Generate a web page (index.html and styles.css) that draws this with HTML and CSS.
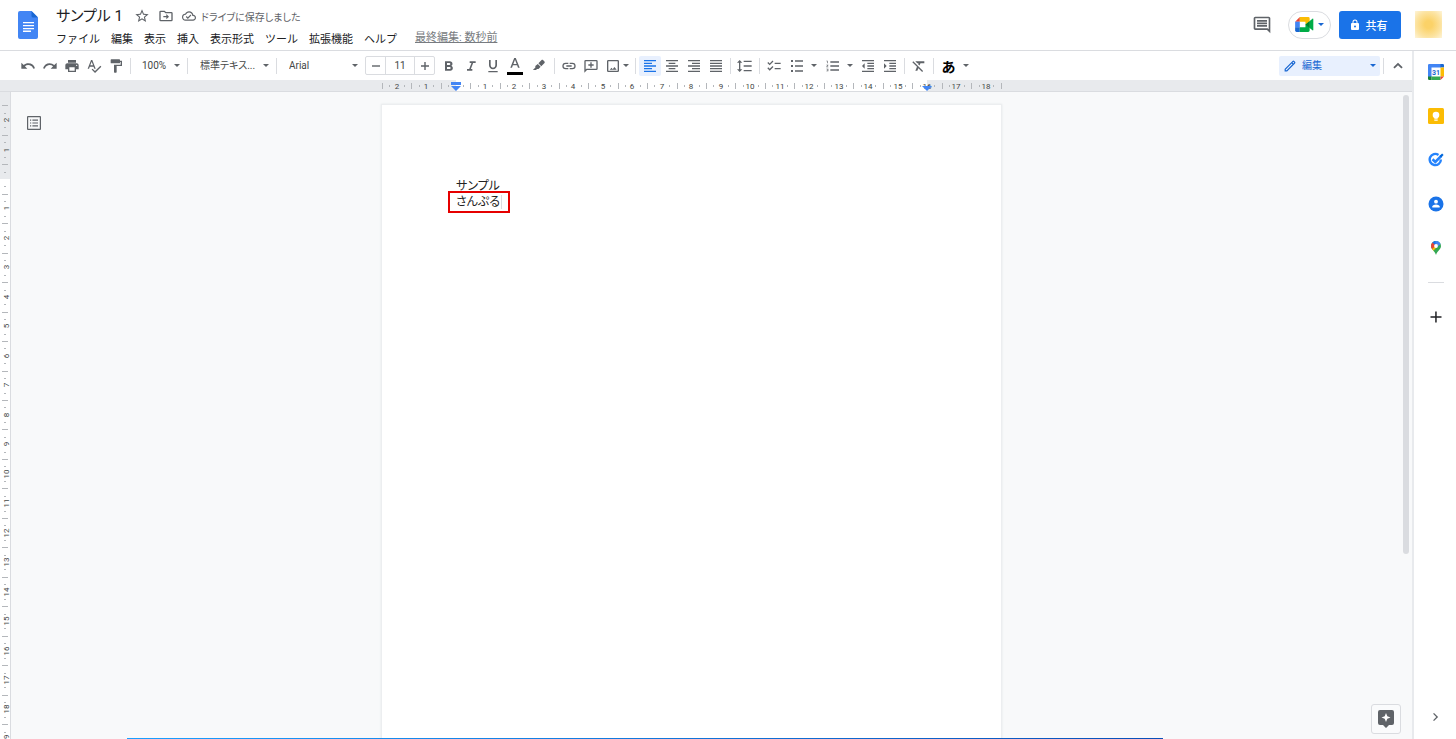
FILE: index.html
```html
<!DOCTYPE html>
<html lang="ja">
<head>
<meta charset="utf-8">
<title>サンプル 1</title>
<link rel="stylesheet" href="styles.css">
</head>
<body>
<header class="header">
  <a class="logo" href="#" aria-label="ドキュメント ホーム">
    <svg width="20" height="28" viewBox="0 0 20 28"><path fill="#4285f4" d="M2 0h11.500L20 6.500V26a2 2 0 0 1-2 2H2a2 2 0 0 1-2-2V2a2 2 0 0 1 2-2z"/><path fill="#1967d2" d="M13.500 0 20 6.500h-5a1.500 1.500 0 0 1-1.500-1.500z"/><path fill="#fff" d="M5 11h11v1.300H5zM5 14h11v1.300H5zM5 17h11v1.300H5zM5 19.600h8v1.300H5z"/></svg>
  </a>
  <div class="doc-head">
    <div class="title-row">
      <h1 class="title">サンプル 1</h1>
      <button class="head-icon" aria-label="スター"><svg class="i16" viewBox="0 0 24 24"><path d="M22 9.240l-7.190-.62L12 2 9.190 8.630 2 9.240l5.460 4.730L5.820 21 12 17.270 18.180 21l-1.630-7.030L22 9.240zM12 15.400l-3.760 2.270 1-4.280-3.320-2.880 4.380-.38L12 6.100l1.710 4.040 4.380.38-3.320 2.880 1 4.280L12 15.400z"/></svg></button>
      <button class="head-icon" aria-label="移動"><svg class="i16" viewBox="0 0 24 24"><path d="M20 6h-8l-2-2H4a2 2 0 0 0-2 2v12a2 2 0 0 0 2 2h16a2 2 0 0 0 2-2V8a2 2 0 0 0-2-2zm0 12H4V6h5.170l2 2H20v10zm-7.500-1 4-4-4-4v3H8v2h4.500v3z"/></svg></button>
      <span class="saved"><svg class="i14" viewBox="0 0 24 24"><path d="M19.350 10.040A7.490 7.490 0 0 0 12 4C9.110 4 6.600 5.640 5.350 8.040A5.994 5.994 0 0 0 0 14c0 3.310 2.690 6 6 6h13c2.760 0 5-2.240 5-5 0-2.640-2.050-4.780-4.650-4.960zM19 18H6c-2.210 0-4-1.790-4-4 0-2.050 1.530-3.760 3.560-3.970l1.070-.11.500-.95A5.469 5.469 0 0 1 12 6c2.620 0 4.880 1.860 5.390 4.430l.3 1.500 1.530.11A2.980 2.980 0 0 1 22 15c0 1.650-1.350 3-3 3zm-9-3.820-2.090-2.090L6.500 13.500 10 17l6.010-6.010-1.410-1.410z"/></svg>ドライブに保存しました</span>
    </div>
    <nav class="menu">
      <button>ファイル</button><button>編集</button><button>表示</button><button>挿入</button><button>表示形式</button><button>ツール</button><button>拡張機能</button><button>ヘルプ</button>
      <a class="last-edit" href="#">最終編集: 数秒前</a>
    </nav>
  </div>
  <div class="head-right">
    <button class="comments" aria-label="コメント"><svg width="20" height="20" viewBox="0 0 24 24"><path d="M21.990 4c0-1.100-.89-2-1.990-2H4c-1.100 0-2 .9-2 2v12c0 1.100.9 2 2 2h14l4 4-.010-18zM20 4v13.170L18.830 16H4V4h16zM6 12h12v2H6v-2zm0-3h12v2H6V9zm0-3h12v2H6V6z"/></svg></button>
    <button class="meet" aria-label="ビデオ会議">
      <svg width="19" height="15" viewBox="0 0 20 16"><path fill="#ea4335" d="M0 5 5 0v5z"/><path fill="#fbbc04" d="M5 0h9a1.500 1.500 0 0 1 1.500 1.500V5L11 8V5H5z"/><path fill="#4285f4" d="M0 5h5v6H0z"/><path fill="#1967d2" d="M0 11h5v5H1.500A1.500 1.500 0 0 1 0 14.500z"/><path fill="#00ac47" d="M5 11h6V8l4.500-3v9.500A1.500 1.500 0 0 1 14 16H5z"/><path fill="#00ac47" d="m15.500 4.300 3-2.500c.4-.3.900 0 .9.400v11.600c0 .4-.5.700-.9.400l-3-2.500z"/><path fill="#00832d" d="m11 8 4.500-3.700v7.400z"/></svg>
      <svg class="arrow blue" viewBox="0 0 6 3"><path d="M0 0h6L3 3z"/></svg>
    </button>
    <button class="share"><svg width="12" height="12" viewBox="0 0 24 24"><path d="M18 8h-1V6A5 5 0 0 0 7 6v2H6a2 2 0 0 0-2 2v10a2 2 0 0 0 2 2h12a2 2 0 0 0 2-2V10a2 2 0 0 0-2-2zm-6 9a2 2 0 1 1 0-4 2 2 0 0 1 0 4zM9 8V6a3 3 0 0 1 6 0v2z"/></svg>共有</button>
    <button class="avatar" aria-label="アカウント"></button>
  </div>
</header>

<div class="workspace">
  <main class="editor">
    <div class="toolbar" role="toolbar">
      <button class="tool" aria-label="元に戻す"><svg class="i16" viewBox="0 0 24 24"><path d="M12.500 8c-2.650 0-5.050.99-6.900 2.600L2 7v9h9l-3.620-3.620A8.002 8.002 0 0 1 20.100 16l2.370-.78A10.530 10.530 0 0 0 12.500 8z"/></svg></button>
      <button class="tool" aria-label="やり直し"><svg class="i16" viewBox="0 0 24 24"><path d="M18.400 10.600A10.460 10.460 0 0 0 11.500 8c-4.650 0-8.580 3.030-9.960 7.220L3.900 16a8.002 8.002 0 0 1 12.720-3.620L13 16h9V7l-3.600 3.600z"/></svg></button>
      <button class="tool" aria-label="印刷"><svg class="i16" viewBox="0 0 24 24"><path d="M19 8H5c-1.660 0-3 1.340-3 3v6h4v4h12v-4h4v-6c0-1.660-1.340-3-3-3zm-3 11H8v-5h8v5zm3-7a1 1 0 1 1 0-2 1 1 0 0 1 0 2zm-1-9H6v4h12V3z"/></svg></button>
      <button class="tool" aria-label="スペルチェック"><svg class="i16" viewBox="0 0 24 24"><path d="M12.450 16h2.090L9.430 3H7.570L2.460 16h2.090l1.120-3h5.640l1.140 3zm-6.020-5L8.500 5.480 10.570 11H6.430zm15.160.59-8.090 8.090L9.830 16l-1.410 1.410 5.090 5.090L23 13l-1.410-1.410z"/></svg></button>
      <button class="tool" aria-label="書式を貼り付け"><svg class="i16" viewBox="0 0 24 24"><path d="M18 4V3a1 1 0 0 0-1-1H5a1 1 0 0 0-1 1v4a1 1 0 0 0 1 1h12a1 1 0 0 0 1-1V6h1v4H9v11a1 1 0 0 0 1 1h2a1 1 0 0 0 1-1v-9h8V4h-3z"/></svg></button>
      <span class="sep"></span>
      <label class="drop zoom"><select aria-label="ズーム"><option>100%</option></select><svg class="arrow" viewBox="0 0 6 3"><path d="M0 0h6L3 3z"/></svg></label>
      <span class="sep"></span>
      <label class="drop style"><select aria-label="スタイル"><option>標準テキス...</option></select><svg class="arrow" viewBox="0 0 6 3"><path d="M0 0h6L3 3z"/></svg></label>
      <span class="sep"></span>
      <label class="drop font"><select aria-label="フォント"><option>Arial</option></select><svg class="arrow" viewBox="0 0 6 3"><path d="M0 0h6L3 3z"/></svg></label>
      <div class="size-box">
        <button aria-label="縮小"><svg width="8" height="8" viewBox="0 0 8 8"><path d="M0 3.300h8v1.400H0z"/></svg></button>
        <input type="text" value="11" aria-label="フォントサイズ">
        <button aria-label="拡大"><svg width="8" height="8" viewBox="0 0 8 8"><path d="M0 3.300h3.300V0h1.400v3.300H8v1.400H4.700V8H3.300V4.700H0z"/></svg></button>
      </div>
      <button class="tool" aria-label="太字"><svg class="i16" viewBox="0 0 24 24"><path d="M15.600 11.790c.97-.67 1.650-1.770 1.650-2.790 0-2.260-1.750-4-4-4H6v14h8.040c2.090 0 3.710-1.700 3.710-3.790 0-1.520-.86-2.820-2.150-3.420zM9 7.500h3.500a1.500 1.500 0 0 1 0 3H9v-3zm4 9H9v-3h4a1.500 1.500 0 0 1 0 3z"/></svg></button>
      <button class="tool" aria-label="斜体"><svg class="i16" viewBox="0 0 24 24"><path d="M10 5v2.500h2.710l-3.420 9H6V19h8v-2.500h-2.210l3.420-9H19V5z"/></svg></button>
      <button class="tool" aria-label="下線"><svg class="i16" viewBox="0 0 24 24"><path d="M12 17c3.310 0 6-2.690 6-6V3h-2.500v8a3.500 3.500 0 0 1-7 0V3H6v8c0 3.310 2.690 6 6 6zm-7 2.500v2h14v-2H5z"/></svg></button>
      <button class="tool" aria-label="文字の色"><svg width="18" height="18" viewBox="0 0 18 18"><path d="M8.200 1h1.600l3.900 9.700h-1.700l-.9-2.500H6.900L6 10.700H4.300zM9 2.700 7.400 6.900h3.200z"/><path fill="#000" d="M1 15h16v3H1z"/></svg></button>
      <button class="tool pen" aria-label="ハイライト"><svg width="14" height="14" viewBox="0 0 14 14"><path d="M9.600 1.100c.4-.4 1-.4 1.400 0l1.500 1.500c.4.4.4 1 0 1.400L9.300 7.200 6.400 4.300zM5.800 4.900 8.700 7.800l-2.200 2.200-1.500-.1-1 1H.9l2.500-2.500-.1-1.300z"/></svg></button>
      <span class="sep"></span>
      <button class="tool" aria-label="リンク"><svg class="i16" viewBox="0 0 24 24"><path d="M3.900 12A3.100 3.100 0 0 1 7 8.900h4V7H7a5 5 0 0 0 0 10h4v-1.900H7A3.100 3.100 0 0 1 3.900 12zM8 13h8v-2H8v2zm9-6h-4v1.900h4a3.100 3.100 0 0 1 0 6.200h-4V17h4a5 5 0 0 0 0-10z"/></svg></button>
      <button class="tool" aria-label="コメントを追加"><svg class="i16" viewBox="0 0 24 24"><path d="M20 3H4a2 2 0 0 0-2 2v17l4-4h14a2 2 0 0 0 2-2V5a2 2 0 0 0-2-2zm0 13H5.200L4 17.200V5h16v11zm-9-1.500h2v-3h3v-2h-3v-3h-2v3H8v2h3z"/></svg></button>
      <button class="tool image" aria-label="画像"><svg class="i16" viewBox="0 0 24 24"><path d="M19 5v14H5V5h14m0-2H5a2 2 0 0 0-2 2v14a2 2 0 0 0 2 2h14a2 2 0 0 0 2-2V5a2 2 0 0 0-2-2zm-4.860 10.500-2.500 3.200L9.900 14.600 7 17.500h10.500z"/></svg><svg class="arrow" viewBox="0 0 6 3"><path d="M0 0h6L3 3z"/></svg></button>
      <span class="sep"></span>
      <button class="tool active" aria-label="左揃え"><svg class="i16" viewBox="0 0 24 24"><path d="M15 15H3v2h12v-2zm0-8H3v2h12V7zM3 13h18v-2H3v2zm0 8h18v-2H3v2zM3 3v2h18V3H3z"/></svg></button>
      <button class="tool" aria-label="中央揃え"><svg class="i16" viewBox="0 0 24 24"><path d="M7 15v2h10v-2H7zm-4 6h18v-2H3v2zm0-8h18v-2H3v2zm4-6v2h10V7H7zM3 3v2h18V3H3z"/></svg></button>
      <button class="tool" aria-label="右揃え"><svg class="i16" viewBox="0 0 24 24"><path d="M3 21h18v-2H3v2zm6-4h12v-2H9v2zm-6-4h18v-2H3v2zm6-4h12V7H9v2zM3 3v2h18V3H3z"/></svg></button>
      <button class="tool" aria-label="両端揃え"><svg class="i16" viewBox="0 0 24 24"><path d="M3 21h18v-2H3v2zm0-4h18v-2H3v2zm0-4h18v-2H3v2zm0-4h18V7H3v2zm0-6v2h18V3H3z"/></svg></button>
      <span class="sep"></span>
      <button class="tool" aria-label="行間隔"><svg class="i16" viewBox="0 0 24 24"><path d="M5 7h3L4 3 0 7h3v10H0l4 4 4-4H5V7zm5-3v2h12V4H10zm0 16h12v-2H10v2zm0-7h12v-2H10v2z"/></svg></button>
      <span class="sep"></span>
      <button class="tool" aria-label="チェックリスト"><svg class="i16" viewBox="0 0 24 24"><path d="M22 7h-9v2h9V7zm0 8h-9v2h9v-2zM5.540 11 2 7.460l1.410-1.410 2.120 2.120 4.240-4.240 1.410 1.410L5.540 11zm0 8L2 15.460l1.410-1.410 2.120 2.120 4.240-4.240 1.410 1.410L5.540 19z"/></svg></button>
      <button class="tool list" aria-label="箇条書き"><svg class="i16" viewBox="0 0 24 24"><path d="M3 3h3v3H3zM3 10.500h3v3H3zM3 18h3v3H3zM9 3.500h12v2H9zM9 11h12v2H9zM9 18.500h12v2H9z"/></svg><svg class="arrow" viewBox="0 0 6 3"><path d="M0 0h6L3 3z"/></svg></button>
      <button class="tool list" aria-label="番号付きリスト"><svg class="i16" viewBox="0 0 24 24"><path d="M2 17h2v.5H3v1h1v.5H2v1h3v-4H2v1zm1-9h1V4H2v1h1v3zm-1 3h1.800L2 13.100v.9h3v-1H3.200L5 10.900V10H2v1zm6-6v2h13V5H8zm0 14h13v-2H8v2zm0-6h13v-2H8v2z"/></svg><svg class="arrow" viewBox="0 0 6 3"><path d="M0 0h6L3 3z"/></svg></button>
      <button class="tool" aria-label="インデント減"><svg class="i16" viewBox="0 0 24 24"><path d="M11 17h10v-2H11v2zm-8-5 4 4V8l-4 4zm0 9h18v-2H3v2zM3 3v2h18V3H3zm8 6h10V7H11v2zm0 4h10v-2H11v2z"/></svg></button>
      <button class="tool" aria-label="インデント増"><svg class="i16" viewBox="0 0 24 24"><path d="M3 21h18v-2H3v2zM3 8v8l4-4-4-4zm8 9h10v-2H11v2zM3 3v2h18V3H3zm8 6h10V7H11v2zm0 4h10v-2H11v2z"/></svg></button>
      <span class="sep"></span>
      <button class="tool" aria-label="書式をクリア"><svg class="i16" viewBox="0 0 24 24"><path d="M20 8V5H6.390l3 3h1.830l-.55 1.280 2.090 2.100L14.210 8H20zM3.410 4.860 2 6.270l6.970 6.970L6.500 19h3l1.570-3.660L16.730 21l1.410-1.410z"/></svg></button>
      <span class="sep"></span>
      <button class="tool ime" aria-label="入力ツール">あ<svg class="arrow" viewBox="0 0 6 3"><path d="M0 0h6L3 3z"/></svg></button>
      <div class="mode-area">
        <label class="mode"><svg width="12" height="12" viewBox="2 2 20 20"><path d="M20.410 4.940l-1.350-1.350a2.010 2.010 0 0 0-2.830 0L3 16.820V21h4.180L20.410 7.770a2 2 0 0 0 0-2.830zM6.410 19.060l-1.470-.01.010-1.420 9.830-9.830 1.410 1.410-9.780 9.850zM17.610 7.800 16.200 6.390l1.440-1.390L19 6.370z"/></svg><select aria-label="モード"><option>編集</option></select><svg class="arrow blue" viewBox="0 0 6 3"><path d="M0 0h6L3 3z"/></svg></label>
        <span class="sep"></span>
        <button class="tool" aria-label="メニューを非表示"><svg class="i16" viewBox="0 0 24 24"><path d="M12 7l-7 7 1.900 1.900 5.100-5.100 5.100 5.100L19 14z"/></svg></button>
      </div>
    </div>

    <div class="h-ruler"><svg id="h-ruler" width="621" height="11"></svg></div>

    <div class="canvas">
      <div class="v-ruler"><svg id="v-ruler" width="10" height="647"></svg></div>
      <div class="pages">
        <button class="outline" aria-label="概要を表示"><svg width="14" height="14" viewBox="0 0 14 14"><path fill-rule="evenodd" d="M1 0h12a1 1 0 0 1 1 1v12a1 1 0 0 1-1 1H1a1 1 0 0 1-1-1V1a1 1 0 0 1 1-1zm.2 1.200v11.600h11.600V1.200zM3 3.500h1.200v1.200H3zm2.400 0H11v1.200H5.400zM3 6.400h1.200v1.200H3zm2.400 0H11v1.200H5.400zM3 9.300h1.200v1.200H3zm2.400 0H11v1.200H5.400z"/></svg></button>
        <article class="page">
          <p>サンプル</p>
          <p><span class="marked">さんぷる<span class="caret"></span></span></p>
        </article>
        <div class="scroll-thumb"></div>
        <button class="explore" aria-label="データ探索"><svg width="16" height="18" viewBox="0 0 16 18"><path fill="#5f6368" d="M2 0h12a2 2 0 0 1 2 2v11a2 2 0 0 1-2 2h-3l-3 3-3-3H2a2 2 0 0 1-2-2V2a2 2 0 0 1 2-2z"/><path fill="#fff" d="m8 3 1.300 3.200L12.500 7.500 9.300 8.800 8 12 6.700 8.800 3.500 7.500l3.200-1.300z"/></svg></button>
      </div>
    </div>
  </main>

  <aside class="side">
    <button aria-label="カレンダー"><svg width="16" height="16" viewBox="0 0 16 16"><path fill="#fff" d="M3 3h10v10H3z"/><path fill="#4285f4" d="M1.200 0H13v3.500H3.500V13H0V1.200A1.200 1.200 0 0 1 1.200 0z"/><path fill="#1967d2" d="M12.500 0h2.300A1.200 1.200 0 0 1 16 1.200v2.300h-3.500z"/><path fill="#fbbc04" d="M12.500 3.500H16v9h-3.500z"/><path fill="#34a853" d="M3.500 12.500h9V16h-9z"/><path fill="#188038" d="M0 12.500h3.500V16H1.200A1.200 1.200 0 0 1 0 14.800z"/><path fill="#ea4335" d="M12.500 12.500H16L12.500 16z"/><text x="8" y="10.500" class="cal-day">31</text></svg></button>
    <button aria-label="Keep"><svg width="16" height="16" viewBox="0 0 16 16"><rect width="16" height="16" rx="1.500" fill="#fbbc04"/><circle cx="8" cy="7" r="3.300" fill="#fff"/><path fill="#fff" d="M6.300 9h3.400v1.700H6.300zM6.300 11.400h3.400v1.300H6.300z"/></svg></button>
    <button aria-label="ToDo リスト"><svg width="16" height="16" viewBox="0 0 16 16"><path fill="none" stroke="#2684fc" stroke-width="2.400" d="M10.500 2.900A5.600 5.600 0 1 0 12.900 7.500"/><path fill="none" stroke="#2684fc" stroke-width="2.600" d="m4.500 7.200 2.800 2.700L13.500 3.800"/><path fill="#0066da" d="m11.500 4 2.600-2.600 1.500 1.600-2.600 2.600z"/></svg></button>
    <button aria-label="連絡先"><svg width="16" height="16" viewBox="0 0 16 16"><circle cx="8" cy="8" r="7.500" fill="#1a73e8"/><circle cx="8" cy="5.700" r="1.900" fill="#fff"/><path fill="#fff" d="M4.300 11.500V10.600c0-1.300 2.400-2 3.700-2s3.700.7 3.700 2v.9z"/></svg></button>
    <button aria-label="マップ"><svg width="16" height="16" viewBox="0 0 16 16"><clipPath id="pin"><path d="M8 1a5 5 0 0 0-5 5c0 3.700 3.700 4.600 5 9 1.300-4.400 5-5.300 5-9a5 5 0 0 0-5-5z"/></clipPath><g clip-path="url(#pin)"><path fill="#34a853" d="M0 0h16v16H0z"/><path fill="#4285f4" d="M6 0h8v3L8 8z"/><path fill="#1a73e8" d="M3 0h4.500v5L3 3z"/><path fill="#ea4335" d="M0 2h4l4 4-5 4H0z"/><path fill="#fbbc04" d="m3 10 7-6L8 8l-4 4z"/></g><circle cx="8" cy="6" r="1.900" fill="#fff"/></svg></button>
    <hr>
    <button aria-label="アドオンを取得"><svg width="12" height="12" viewBox="0 0 12 12"><path fill="#202124" d="M.5 5.200h4.700V.5h1.500v4.700h4.800v1.500H6.700v4.800H5.200V6.700H.5z"/></svg></button>
    <button class="collapse" aria-label="サイドパネルを非表示"><svg class="i14" viewBox="0 0 24 24"><path d="M8.600 5 7 6.600l5.400 5.400L7 17.400 8.600 19l7-7z"/></svg></button>
  </aside>
</div>
<div class="progress"></div>
<script src="rulers.js"></script>
</body>
</html>
```

FILE: styles.css
```css
* { box-sizing: border-box; }

body {
  margin: 0;
  height: 100vh;
  display: flex;
  flex-direction: column;
  overflow: hidden;
  background: #fff;
  color: #202124;
  font-family: Roboto, "Noto Sans CJK JP", sans-serif;
  font-size: 11px;
}

button, select, input {
  margin: 0;
  padding: 0;
  border: 0;
  background: none;
  font: inherit;
  color: inherit;
}

svg { display: block; flex: none; fill: #5f6368; }
.i16 { width: 16px; height: 16px; }
.i14 { width: 14px; height: 14px; }
.arrow { width: 6px; height: 3px; }
.arrow.blue { fill: #1967d2; }

.header {
  display: flex;
  height: 51px;
  flex: none;
  border-bottom: 1px solid #dadce0;
}
.logo { padding: 11px 18px 0; }
.doc-head { flex: 1; }
.title-row {
  display: flex;
  align-items: center;
  height: 28px;
  padding-top: 4px;
}
.title {
  margin: 0 11px 0 0;
  font-size: 15px;
  font-weight: 400;
  line-height: 24px;
  font-feature-settings: "palt";
}
.head-icon { margin-right: 8px; }
.saved {
  display: flex;
  align-items: center;
  gap: 5px;
  color: #5f6368;
  font-size: 10px;
  font-feature-settings: "palt";
}
.menu {
  display: flex;
  align-items: center;
  gap: 11px;
  height: 20px;
}
.last-edit {
  margin: 0 0 4px 7px;
  color: #777b80;
}

.head-right {
  display: flex;
  align-items: center;
  padding: 0 14px 1px 0;
}
.comments { margin-right: 16px; }
.meet {
  display: flex;
  align-items: center;
  justify-content: center;
  gap: 4px;
  width: 43px;
  height: 28px;
  margin-right: 8px;
  border: 1px solid #dadce0;
  border-radius: 14px;
}
.share {
  display: flex;
  align-items: center;
  justify-content: center;
  gap: 5px;
  width: 62px;
  height: 28px;
  margin-right: 14px;
  padding-right: 4px;
  border-radius: 3px;
  background: #1a73e8;
  color: #fff;
  font-weight: 500;
}
.share svg { fill: #fff; }
.avatar {
  width: 27px;
  height: 27px;
  background: radial-gradient(circle, #fbd268 20%, #fce3a0 65%, #fef4d9 100%);
}

.workspace { flex: 1; display: flex; min-height: 0; }
.editor { flex: 1; display: flex; flex-direction: column; min-width: 0; }

.toolbar {
  display: flex;
  align-items: center;
  flex: none;
  height: 29px;
  padding-left: 17px;
  font-size: 10px;
  color: #444746;
}
.sep { width: 1px; height: 16px; margin: 0 3px; background: #dadce0; }
.tool {
  display: flex;
  align-items: center;
  justify-content: center;
  width: 22px;
  height: 20px;
  border-radius: 2px;
}
.tool.active { background: #e8f0fe; }
.tool.active svg { fill: #1a73e8; }
.tool.pen { width: 25px; }
.tool.image { width: 30px; gap: 2px; }
.tool.list { width: 36px; gap: 6px; }
.tool.ime {
  width: 36px;
  gap: 7px;
  font-size: 14px;
  font-weight: 700;
  color: #000;
}

.drop { display: grid; align-items: center; }
.drop select {
  grid-area: 1 / 1;
  appearance: none;
  width: 100%;
  height: 20px;
}
.drop .arrow { grid-area: 1 / 1; justify-self: end; margin-right: 4px; pointer-events: none; }
.zoom { width: 50px; }
.zoom select { padding-left: 8px; }
.style { width: 82px; }
.style select { padding-left: 9px; font-feature-settings: "palt"; }
.font { width: 82px; }
.font select { padding-left: 9px; }

.size-box {
  display: flex;
  width: 70px;
  height: 19px;
  margin: 0 3px;
  border: 1px solid #dadce0;
  border-radius: 2px;
}
.size-box button { display: grid; place-items: center; width: 19px; }
.size-box input {
  flex: 1;
  min-width: 0;
  border: solid #dadce0;
  border-width: 0 1px;
  text-align: center;
}

.mode-area { display: flex; align-items: center; margin-left: auto; padding-right: 3px; }
.mode {
  display: flex;
  align-items: center;
  width: 101px;
  height: 20px;
  padding: 0 4px 0 5px;
  border-radius: 2px;
  background: #e8f0fe;
  color: #1967d2;
}
.mode svg { fill: #1967d2; }
.mode select { appearance: none; flex: 1; padding-left: 6px; }

.h-ruler {
  display: flex;
  justify-content: center;
  flex: none;
  padding: 0 40px 0 11px;
  border-bottom: 1px solid #dadce0;
  background: #e8eaed;
}
.ruler-page { fill: #fff; }
.ruler-text {
  fill: #444746;
  font-family: Roboto, sans-serif;
  font-size: 8px;
  text-anchor: middle;
}
.ruler-tick { fill: #b4b7bb; }
.ruler-mark { fill: #4285f4; }

.canvas { flex: 1; display: flex; min-height: 0; overflow: hidden; background: #f8f9fa; }
.v-ruler {
  flex: none;
  width: 11px;
  overflow: hidden;
  border-right: 1px solid #dadce0;
  background: #e8eaed;
}
.pages {
  position: relative;
  flex: 1;
  display: flex;
  justify-content: center;
  padding: 12px 40px 0 0;
}
.page {
  width: 621px;
  padding: 73px 74px;
  border: 1px solid #eceef0;
  border-bottom: 0;
  background: #fff;
  box-shadow: 0 0 2px #e4e6e9;
  color: #222;
  font-size: 12px;
  line-height: 16px;
  font-feature-settings: "palt";
}
.page p { margin: 0; }
.marked {
  display: inline-flex;
  align-items: center;
  margin: 0 -5px;
  padding: 0 5px;
  outline: 2px solid #e60000;
  outline-offset: 1px;
}
.caret { width: 1px; height: 14px; margin-left: 1px; background: #dadce0; }
.outline { position: absolute; left: 16px; top: 24px; }
.scroll-thumb {
  position: absolute;
  top: 3px;
  right: 3px;
  width: 6px;
  height: 71%;
  border-radius: 3px;
  background: #dadce0;
}
.explore {
  position: absolute;
  right: 11px;
  bottom: 5px;
  display: grid;
  place-items: center;
  width: 30px;
  height: 30px;
  border: 1px solid #dadce0;
  border-radius: 3px;
  background: #fafbfc;
}

.side {
  display: flex;
  flex-direction: column;
  align-items: center;
  gap: 28px;
  width: 44px;
  padding: 13px 0 15px 1px;
  border-left: 2px solid #e8eaed;
}
.side hr {
  width: 16px;
  height: 1px;
  margin: -2px 0 0;
  border: 0;
  background: #dadce0;
}
.side .collapse { margin-top: auto; }
.cal-day {
  fill: #1967d2;
  font-family: Roboto, sans-serif;
  font-size: 7px;
  font-weight: 700;
  text-anchor: middle;
}

.progress {
  position: fixed;
  left: 8.7%;
  right: 20.1%;
  bottom: 0;
  height: 1px;
  background: linear-gradient(90deg, #1a9fff, #0a4fb8);
}
```

FILE: rulers.js
```js
const NS = "http://www.w3.org/2000/svg";
const CM = 29.47;

function add(parent, name, attrs, text) {
  const el = document.createElementNS(NS, name);
  for (const key in attrs) el.setAttribute(key, attrs[key]);
  if (text !== undefined) el.textContent = text;
  parent.appendChild(el);
}

// Horizontal ruler: numbers on centimetres, long ticks on halves, dots on quarters
const h = document.getElementById("h-ruler");
const hZero = 75;
add(h, "rect", { x: hZero, y: 0, width: 471, height: 11, class: "ruler-page" });
for (let q = -10; q <= 74; q++) {
  const x = Math.floor(hZero + q * CM / 4);
  if (q % 4 === 0) {
    if (q !== 0) add(h, "text", { x, y: 9, class: "ruler-text" }, Math.abs(q / 4));
  } else if (q % 2 === 0) {
    add(h, "rect", { x, y: 3, width: 1, height: 6, class: "ruler-tick" });
  } else {
    add(h, "rect", { x, y: 5, width: 1, height: 2, class: "ruler-tick" });
  }
}
add(h, "path", { d: "M70 2h10v3H70zM70 6h10l-5 5z", class: "ruler-mark" });
add(h, "path", { d: "M541 6h10l-5 5z", class: "ruler-mark" });

// Vertical ruler
const v = document.getElementById("v-ruler");
const vZero = 87;
add(v, "rect", { x: 0, y: vZero, width: 10, height: 600, class: "ruler-page" });
for (let q = -10; q <= 76; q++) {
  const y = Math.round(vZero + q * CM / 4);
  if (q % 4 === 0) {
    if (q !== 0) add(v, "text", { x: 0, y: 0, transform: `translate(9 ${y}) rotate(-90)`, class: "ruler-text" }, Math.abs(q / 4));
  } else if (q % 2 === 0) {
    add(v, "rect", { x: 2, y, width: 6, height: 1, class: "ruler-tick" });
  } else {
    add(v, "rect", { x: 4, y, width: 2, height: 1, class: "ruler-tick" });
  }
}
```
